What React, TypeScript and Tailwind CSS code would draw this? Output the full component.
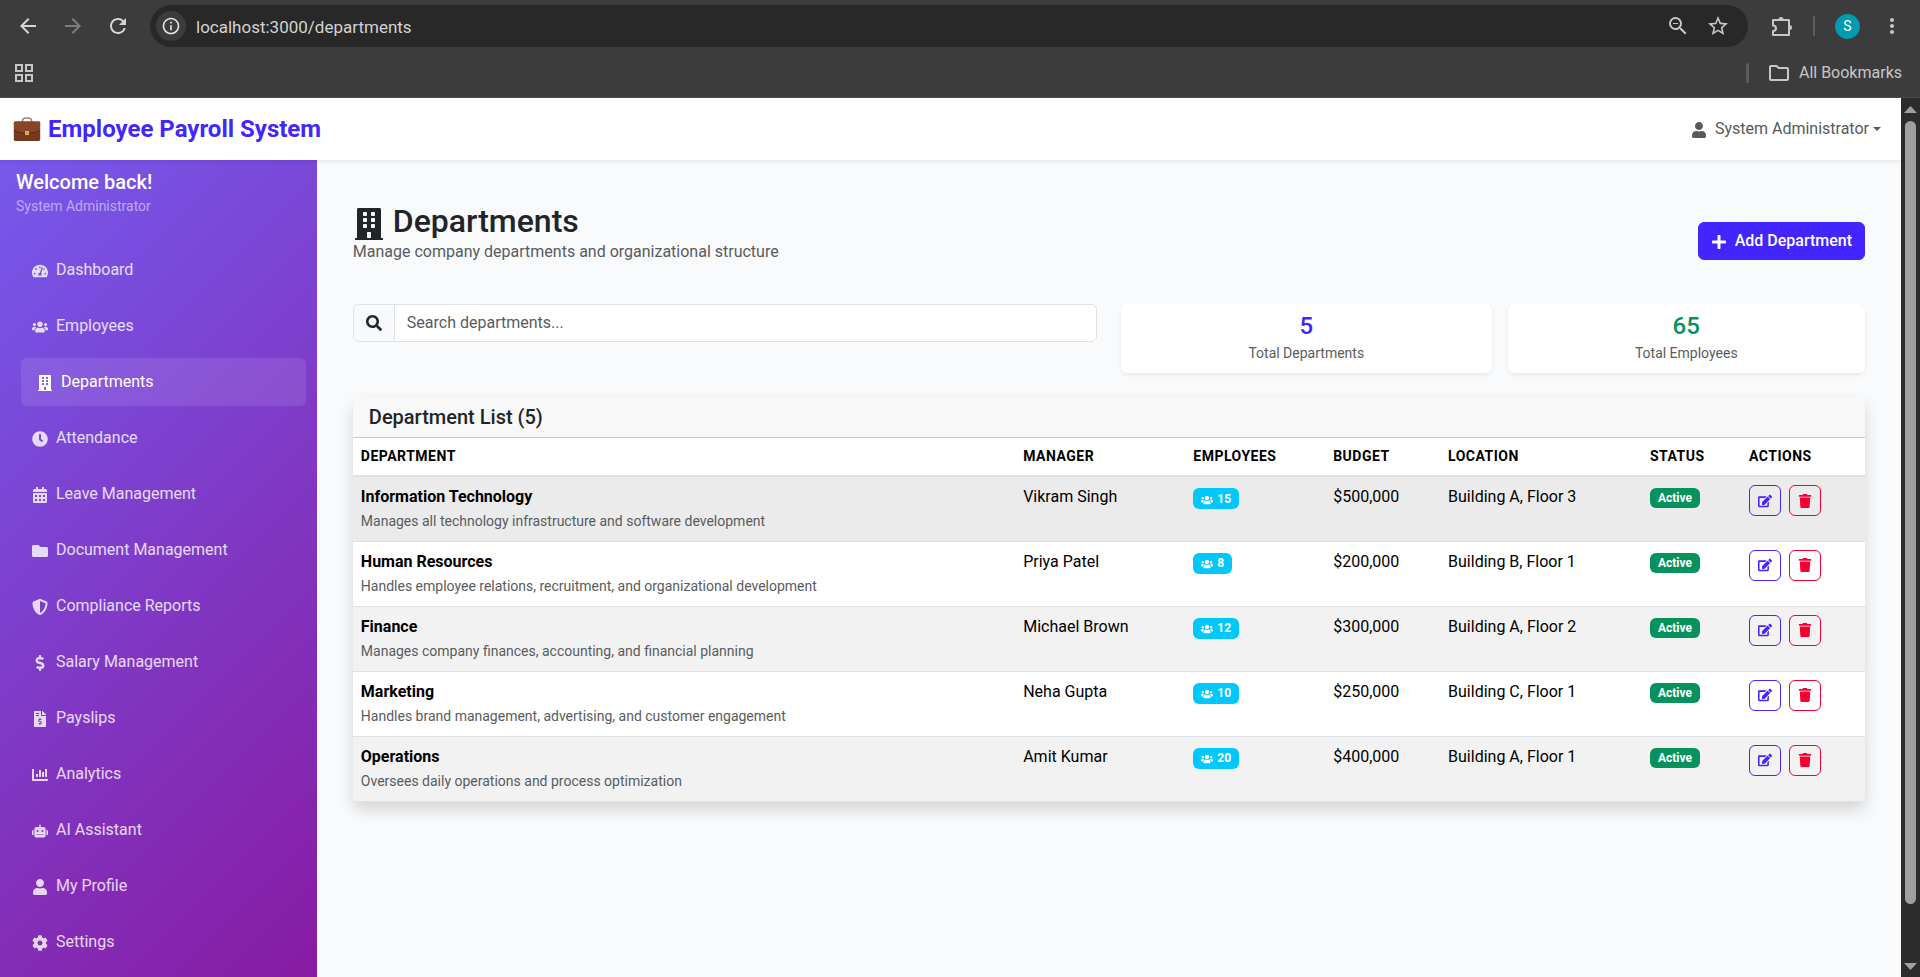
import React from "react";
import {
  FaTachometerAlt, FaUsers, FaBuilding, FaClock, FaCalendarAlt, FaFolder, FaShieldAlt,
  FaDollarSign, FaFileInvoiceDollar, FaChartBar, FaRobot, FaUser, FaCog, FaSearch, FaPlus,
  FaEdit, FaTrash,
} from "react-icons/fa";
import {
  MdArrowBack, MdArrowForward, MdRefresh, MdInfoOutline, MdOutlineZoomOut, MdStarOutline,
  MdMoreVert, MdOutlineFolder, MdOutlineGridView,
} from "react-icons/md";

const navItems = [
  { label: "Dashboard", Icon: FaTachometerAlt },
  { label: "Employees", Icon: FaUsers },
  { label: "Departments", Icon: FaBuilding, active: true },
  { label: "Attendance", Icon: FaClock },
  { label: "Leave Management", Icon: FaCalendarAlt },
  { label: "Document Management", Icon: FaFolder },
  { label: "Compliance Reports", Icon: FaShieldAlt },
  { label: "Salary Management", Icon: FaDollarSign },
  { label: "Payslips", Icon: FaFileInvoiceDollar },
  { label: "Analytics", Icon: FaChartBar },
  { label: "AI Assistant", Icon: FaRobot },
  { label: "My Profile", Icon: FaUser },
  { label: "Settings", Icon: FaCog },
];

const departments = [
  { name: "Information Technology", note: "Manages all technology infrastructure and software development", manager: "Vikram Singh", count: 15, budget: "$500,000", location: "Building A, Floor 3", bg: "bg-[#ebebeb]" },
  { name: "Human Resources", note: "Handles employee relations, recruitment, and organizational development", manager: "Priya Patel", count: 8, budget: "$200,000", location: "Building B, Floor 1", bg: "bg-white" },
  { name: "Finance", note: "Manages company finances, accounting, and financial planning", manager: "Michael Brown", count: 12, budget: "$300,000", location: "Building A, Floor 2", bg: "bg-[#f2f2f2]" },
  { name: "Marketing", note: "Handles brand management, advertising, and customer engagement", manager: "Neha Gupta", count: 10, budget: "$250,000", location: "Building C, Floor 1", bg: "bg-white" },
  { name: "Operations", note: "Oversees daily operations and process optimization", manager: "Amit Kumar", count: 20, budget: "$400,000", location: "Building A, Floor 1", bg: "bg-[#f2f2f2]" },
];

const columns = [
  { label: "Department", width: "w-[43.8%]" },
  { label: "Manager", width: "w-[11.25%]" },
  { label: "Employees", width: "w-[9.25%]" },
  { label: "Budget", width: "w-[7.6%]" },
  { label: "Location", width: "w-[13.35%]" },
  { label: "Status", width: "w-[6.55%]" },
  { label: "Actions", width: "w-[8.2%]" },
];

function Briefcase() {
  return (
    <svg viewBox="0 0 28 26" className="h-[26px] w-7 shrink-0" aria-hidden="true">
      <path d="M9.5 6V4.2C9.5 2.6 11.5 2 14 2s4.5.6 4.500 2.200V6" fill="none" stroke="#b07a62" strokeWidth="1.500" />
      <rect x="0.8" y="5.500" width="26.400" height="19.500" rx="1.400" fill="#733a21" />
      <path d="M.8 7Q.9 5.500 2.400 5.500h23.200q1.500 0 1.600 1.500L26.600 14.500C22 18 6 18 1.400 14.500Z" fill="#884528" />
      <path d="M1 14C6 18.300 22 18.300 27 14" fill="none" stroke="#57290f" strokeWidth=".9" />
      <rect x="12.100" y="15" width="3.800" height="4" rx=".5" fill="#f3b25e" />
      <rect x="13.500" y="16.200" width="1" height="1.400" fill="#a8722c" />
    </svg>
  );
}

function PuzzleIcon() {
  return (
    <svg viewBox="0 0 24 24" className="size-6" aria-hidden="true">
      <path d="M4 6h16v15H4v-4c2 0 3-1.200 3-2.800S6 11.400 4 11.400Z" fill="none" stroke="currentColor" strokeWidth="2" strokeLinejoin="round" />
      <path d="M9.500 5.500a2.500 2.500 0 0 1 5 0ZM20.500 11a2.500 2.500 0 0 1 0 5Z" fill="currentColor" />
    </svg>
  );
}

function BrowserBar() {
  return (
    <div className="shrink-0 border-b border-[#4a4a4a] bg-[#3c3c3c] text-[#c7c7c7]">
      <div className="flex h-[52px] items-center pl-4 pr-4">
        <button aria-label="Back" className="mr-[21px] text-[#d5d5d5]"><MdArrowBack size={24} /></button>
        <button aria-label="Forward" className="mr-[21px] text-[#7d7d7d]"><MdArrowForward size={24} /></button>
        <button aria-label="Reload" className="mr-5 text-[#d5d5d5]"><MdRefresh size={24} /></button>
        <div className="flex h-[42px] flex-1 items-center rounded-full bg-[#282828] pl-[6px] pr-[18px]">
          <span className="flex size-[30px] items-center justify-center rounded-full bg-[#3c3c3c] text-[#e3e3e3]"><MdInfoOutline size={20} /></span>
          <input aria-label="Address" defaultValue="localhost:3000/departments" className="ml-[10px] min-w-0 flex-1 bg-transparent pt-[2px] text-[17px] leading-6 text-[#d3d3d3] outline-none" />
          <button aria-label="Zoom" className="mr-4"><MdOutlineZoomOut size={24} /></button>
          <button aria-label="Bookmark this page"><MdStarOutline size={24} /></button>
        </div>
        <button aria-label="Extensions" className="ml-[21px]"><PuzzleIcon /></button>
        <span className="ml-5 h-5 w-[2px] bg-[#5c5c5c]" />
        <button aria-label="Profile" className="ml-5 flex size-[25px] items-center justify-center rounded-full bg-[#009bb0] text-[14px] text-white">S</button>
        <button aria-label="Menu" className="ml-5"><MdMoreVert size={24} /></button>
      </div>
      <div className="flex h-[45px] items-center justify-between pb-1 pl-3 pr-[18px]">
        <button aria-label="Apps"><MdOutlineGridView size={24} /></button>
        <div className="flex items-center">
          <span className="mr-[18px] h-5 w-[3px] rounded-full bg-[#5c5c5c]" />
          <button className="flex items-center gap-2 text-[16px]"><MdOutlineFolder size={24} />All Bookmarks</button>
        </div>
      </div>
    </div>
  );
}

function Sidebar() {
  return (
    <aside className="w-1/6 shrink-0 overflow-hidden bg-[linear-gradient(135deg,#7659ec_0%,#881ba2_100%)] text-white">
      <div className="px-4 pt-[10px]">
        <h5 className="text-[20px] font-medium leading-6">Welcome back!</h5>
        <p className="text-[14px] leading-6 text-white/50">System Administrator</p>
      </div>
      <nav className="flex flex-col gap-2 px-4 pt-7">
        {navItems.map(({ label, Icon, active }) => (
          <a
            key={label}
            href="#"
            className={
              active
                ? "flex h-12 translate-x-[5px] items-center gap-2 rounded-md bg-white/10 px-4 text-[16px] text-white"
                : "flex h-12 items-center gap-2 rounded-md px-4 text-[16px] text-white/80"
            }
          >
            <Icon className="mt-[2px] size-4" />
            {label}
          </a>
        ))}
      </nav>
    </aside>
  );
}

function Stat({ value, label, color, width }: { value: string; label: string; color: string; width: string }) {
  return (
    <div className={"rounded-md bg-white py-2 text-center shadow-[0_2px_4px_rgba(0,0,0,0.075)] " + width}>
      <h5 className={"text-[24px] font-medium leading-[29px] " + color}>{value}</h5>
      <p className="text-[14px] leading-6 text-[#595c5f]">{label}</p>
    </div>
  );
}

function Scrollbar() {
  return (
    <div className="flex w-[19px] shrink-0 flex-col items-center bg-[#2c2c2c] pb-[7px] pt-2" aria-hidden="true">
      <svg viewBox="0 0 13 7" className="h-[7px] w-[13px]"><path d="M0 7 6.500 0 13 7Z" fill="#9f9f9f" /></svg>
      <div className="mt-2 h-[90.600%] w-[11px] rounded-full bg-[#9f9f9f]" />
      <svg viewBox="0 0 13 7" className="mt-auto h-[7px] w-[13px]"><path d="M0 0 6.500 7 13 0Z" fill="#9f9f9f" /></svg>
    </div>
  );
}

export default function App() {
  return (
    <div className="flex h-screen flex-col overflow-hidden font-[Roboto,sans-serif] text-[16px] leading-6 text-[#212529]">
      <BrowserBar />
      <div className="flex min-h-0 flex-1">
        <div className="flex min-w-0 flex-1 flex-col bg-[#f8fafc]">
          <header className="z-10 flex h-[62px] shrink-0 items-center justify-between bg-white pl-[13px] pr-5 shadow-[0_2px_4px_rgba(0,0,0,0.075)]">
            <a href="#" className="flex items-center gap-[7px] text-[24px] font-bold text-[#4325ff]">
              <Briefcase />
              Employee Payroll System
            </a>
            <button className="flex items-center text-[16px] text-[#595959]">
              <FaUser className="mr-2 mt-[2px] size-4" />
              System Administrator
              <svg viewBox="0 0 8 4" className="ml-1 h-1 w-2"><path d="M0 0h8L4 4Z" fill="currentColor" /></svg>
            </button>
          </header>
          <div className="flex min-h-0 flex-1">
            <Sidebar />
            <main className="min-w-0 flex-1 px-9 pt-[42px]">
              <div className="mb-6 flex items-center justify-between">
                <div className="pb-4">
                  <h2 className="flex items-center gap-2 text-[32px] font-medium leading-[38px]">
                    <FaBuilding className="mt-[6px] size-8" />
                    Departments
                  </h2>
                  <p className="text-[#595c5f]">Manage company departments and organizational structure</p>
                </div>
                <button className="flex h-[38px] items-center gap-2 rounded-md border border-[#4325ff] bg-[#4325ff] px-3 font-medium text-white">
                  <FaPlus className="mt-[2px] size-4" />
                  Add Department
                </button>
              </div>

              <div className="mb-6 flex items-start gap-6">
                <div className="flex h-[38px] min-w-0 flex-1 overflow-hidden rounded-md border border-[#dee2e6]">
                  <label htmlFor="search" className="flex items-center border-r border-[#dee2e6] bg-[#f8f9fa] px-3" aria-label="Search departments">
                    <FaSearch className="size-4" />
                  </label>
                  <input id="search" placeholder="Search departments..." className="min-w-0 flex-1 bg-white px-3 outline-none placeholder:text-[#595c5f]" />
                </div>
                <div className="flex w-[49.2%] gap-4">
                  <Stat value="5" label="Total Departments" color="text-[#4325ff]" width="w-[49.8%]" />
                  <Stat value="65" label="Total Employees" color="text-[#06925c]" width="flex-1" />
                </div>
              </div>

              <section className="overflow-hidden rounded-md bg-white shadow-[0_8px_16px_rgba(0,0,0,0.15)]">
                <div className="border-b border-[#cacbcc] bg-[#f8f8f8] px-4 py-2">
                  <h5 className="text-[20px] font-medium leading-6">Department List (5)</h5>
                </div>
                <table className="w-full table-fixed border-collapse text-left align-top text-black">
                  <thead>
                    <tr className="border-b-2 border-[#dee2e6]">
                      {columns.map((c) => (
                        <th key={c.label} scope="col" className={"h-[38px] px-2 pb-[2px] text-[14px] font-bold uppercase tracking-[0.5px] " + c.width}>{c.label}</th>
                      ))}
                    </tr>
                  </thead>
                  <tbody>
                    {departments.map((d) => (
                      <tr key={d.name} className={"h-[65px] border-b border-[#dee2e6] align-top " + d.bg}>
                        <td className="px-2 pt-2">
                          <strong className="block font-bold">{d.name}</strong>
                          <small className="block text-[14px] leading-6 text-[#595c5f]">{d.note}</small>
                        </td>
                        <td className="px-2 pt-2">{d.manager}</td>
                        <td className="px-2 pt-[11px]">
                          <div className="flex">
                            <span className="flex h-[21px] items-center gap-1 rounded-md bg-[#00c8fa] px-2 text-[12px] font-bold text-white">
                              <FaUsers className="mt-[2px] size-3" />
                              {d.count}
                            </span>
                          </div>
                        </td>
                        <td className="px-2 pt-2">{d.budget}</td>
                        <td className="px-2 pt-2">{d.location}</td>
                        <td className="px-2 pt-[11px]">
                          <div className="flex">
                            <span className="flex h-5 items-center rounded-md bg-[#06925c] px-2 text-[12px] font-bold text-white">Active</span>
                          </div>
                        </td>
                        <td className="px-2 pt-2">
                          <div className="flex gap-2">
                            <button aria-label={"Edit " + d.name} className="flex h-[31px] w-8 items-center justify-center rounded-md border border-[#4325ff] text-[#4325ff]"><FaEdit className="size-[14px]" /></button>
                            <button aria-label={"Delete " + d.name} className="flex h-[31px] w-8 items-center justify-center rounded-md border border-[#f50030] text-[#f50030]"><FaTrash className="size-[14px]" /></button>
                          </div>
                        </td>
                      </tr>
                    ))}
                  </tbody>
                </table>
              </section>
            </main>
          </div>
        </div>
        <Scrollbar />
      </div>
    </div>
  );
}
